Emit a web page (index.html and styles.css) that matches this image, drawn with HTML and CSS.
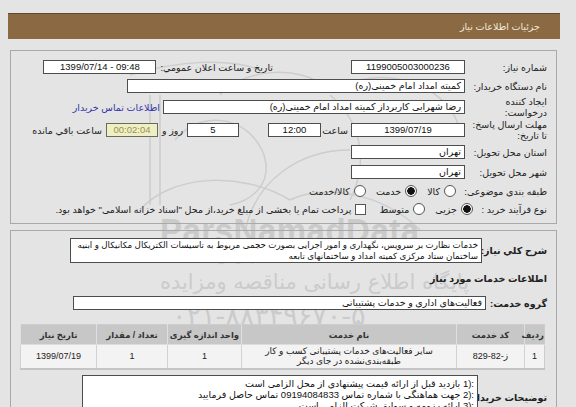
FILE: index.html
```html
<!DOCTYPE html>
<html lang="fa">
<head>
<meta charset="utf-8">
<title>جزئیات اطلاعات نیاز</title>
<link rel="stylesheet" href="styles.css">
</head>
<body>
<div class="page">
  <div class="wm" aria-hidden="true">
    <svg class="wm-logo" width="576" height="407" viewBox="0 0 576 407">
      <g fill="none" stroke="#cdcdcd" stroke-width="1.5">
        <path d="M150 95 L150 205"/>
        <path d="M160 95 L160 205"/>
        <path d="M140 210 C170 175 240 170 290 200"/>
        <path d="M175 140 C200 110 245 115 262 150 C275 180 255 200 230 205"/>
        <path d="M220 95 C240 70 300 62 330 90"/>
        <path d="M245 232 C255 180 300 150 350 150"/>
        <path d="M330 95 C360 120 370 160 350 200"/>
        <path d="M290 200 C320 185 380 190 420 230"/>
        <path d="M360 80 C400 70 450 90 460 130"/>
        <path d="M130 75 C180 60 230 58 260 70"/>
      </g>
    </svg>
    <div class="wm-brand">ParsNamadData</div>
    <div class="wm-script">پارس نماد داده</div>
    <div class="wm-site">پایگاه اطلاع رسانی مناقصه ومزایده</div>
    <div class="wm-phone">۰۲۱-۸۸۳۴۹۶۷۰-۵</div>
  </div>

  <div class="titlebar">جزئیات اطلاعات نیاز</div>

  <div class="panel panel-info">
    <div class="row r1">
      <div class="lbl">شماره نیاز:</div>
      <div class="box num w114">1199005003000236</div>
      <div class="lbl lbl-pub">تاریخ و ساعت اعلان عمومي:</div>
      <div class="box num w113" dir="ltr">1399/07/14 - 09:48</div>
    </div>
    <div class="row r2">
      <div class="lbl">نام دستگاه خریدار:</div>
      <div class="box w338">کمیته امداد امام خمینی(ره)</div>
    </div>
    <div class="row r3">
      <div class="lbl">ایجاد کننده<br>درخواست:</div>
      <div class="box w302">رضا شهرابی کاربرداز کمیته امداد امام خمینی(ره)</div>
      <a class="link" href="#">اطلاعات تماس خریدار</a>
    </div>
    <div class="row r4">
      <div class="lbl">مهلت ارسال پاسخ:<br>تا تاریخ:</div>
      <div class="box num w114" dir="ltr">1399/07/19</div>
      <span class="txt t-hour">ساعت</span>
      <div class="box num w53" dir="ltr">12:00</div>
      <div class="box num w52 days">5</div>
      <span class="txt t-day">روز و</span>
      <div class="box num w52 timer" dir="ltr">00:02:04</div>
      <span class="txt t-rem">ساعت باقي مانده</span>
    </div>
    <div class="row r5">
      <div class="lbl">استان محل تحویل:</div>
      <div class="box w114">تهران</div>
    </div>
    <div class="row r6">
      <div class="lbl">شهر محل تحویل:</div>
      <div class="box w114">تهران</div>
    </div>
    <div class="row r7">
      <div class="lbl">طبقه بندی موضوعی:</div>
      <span class="radio first"></span><span class="opt">کالا</span>
      <span class="radio on"></span><span class="opt">خدمت</span>
      <span class="radio"></span><span class="opt">کالا/خدمت</span>
    </div>
    <div class="row r8">
      <div class="lbl lbl-proc">نوع فرآیند خرید :</div>
      <span class="radio on"></span><span class="opt">جزیی</span>
      <span class="radio"></span><span class="opt">متوسط</span>
      <span class="check"></span><span class="opt">پرداخت تمام یا بخشی از مبلغ خرید،از محل "اسناد خزانه اسلامی" خواهد بود.</span>
    </div>
  </div>

  <div class="panel panel-need">
    <div class="row d-row">
      <div class="lbl-b">شرح کلي نياز:</div>
      <div class="box desc">خدمات نظارت بر سرویس، نگهداری و امور اجرایی بصورت حجمی مربوط به تاسیسات الکتریکال مکانیکال و ابنیه<br>ساختمان ستاد مرکزی کمیته امداد و ساختمانهای تابعه</div>
    </div>
    <div class="sec-title">اطلاعات خدمات مورد نیاز</div>
    <div class="row g-row">
      <div class="lbl-b lbl-g">گروه خدمت:</div>
      <div class="box group">فعالیت‌های اداری و خدمات پشتیبانی</div>
    </div>
    <table class="svc">
      <thead>
        <tr>
          <th class="c-no">ردیف</th>
          <th class="c-code">کد خدمت</th>
          <th class="c-name">نام خدمت</th>
          <th class="c-unit">واحد اندازه گیری</th>
          <th class="c-qty">تعداد / مقدار</th>
          <th class="c-date">تاریخ نیاز</th>
        </tr>
      </thead>
      <tbody>
        <tr>
          <td>1</td>
          <td><span dir="ltr">829-82-ز</span></td>
          <td>سایر فعالیت‌های خدمات پشتیبانی کسب و کار<br>طبقه‌بندی‌نشده در جای دیگر</td>
          <td>1</td>
          <td>1</td>
          <td>1399/07/19</td>
        </tr>
      </tbody>
    </table>
    <div class="row n-row">
      <div class="lbl-b lbl-n">توضیحات خریدار:</div>
      <div class="box notes">
        <div><bdi dir="ltr">1):</bdi> بازدید قبل از ارائه قیمت پیشنهادی از محل الزامی است</div>
        <div><bdi dir="ltr">2):</bdi> جهت هماهنگی با شماره تماس 09194084833 تماس حاصل فرمایید</div>
        <div><bdi dir="ltr">3):</bdi> ارائه رزومه و سوابق شرکت الزامی است</div>
      </div>
    </div>
  </div>
</div>
</body>
</html>
```

FILE: styles.css
```css
* { box-sizing: border-box; }
html, body { margin: 0; padding: 0; }
body {
  background: #e4e4e4;
  font-family: "Liberation Sans", "DejaVu Sans", sans-serif;
  font-size: 9.5px;
  color: #222;
  width: 576px;
  height: 407px;
  overflow: hidden;
}
.page { position: relative; padding-top: 13px; height: 407px; }

/* watermark (behind content) */
.wm { position: absolute; left: 0; top: 0; width: 576px; height: 407px; z-index: 0; pointer-events: none; }
.wm-logo { position: absolute; left: 0; top: 0; }
.wm-brand { position: absolute; left: 160px; top: 212px; font: bold 33px "Liberation Sans", sans-serif; color: #cacaca; letter-spacing: 0.5px; }
.wm-script { position: absolute; left: 150px; top: 244px; font: italic 17px "DejaVu Sans", sans-serif; color: #d2d2d2; }
.wm-site { position: absolute; left: 160px; top: 270px; font: 21px "DejaVu Sans", sans-serif; color: #cbcbcb; }
.wm-phone { position: absolute; left: 172px; top: 300px; font: 27px "DejaVu Sans", sans-serif; color: #cbcbcb; }

.titlebar, .panel { position: relative; z-index: 1; }

.titlebar {
  margin-left: 8px;
  width: 552px;
  height: 26px;
  background: #8b6a43;
  border-top: 1px solid #5e4a33;
  color: #f3eadc;
  direction: rtl;
  padding-right: 20px;
  line-height: 25px;
  font-size: 9.5px;
}

.panel {
  margin-left: 10px;
  width: 547px;
  border: 1px solid #a9a9a9;
  direction: rtl;
}
.panel-info { margin-top: 11px; height: 174px; padding: 9px 9px 0 0; }
.panel-need { margin-top: 6px; height: 200px; padding: 7px 9px 0 0; }

.row { display: flex; align-items: center; }
.lbl { width: 82px; flex: none; line-height: 11px; color: #222; white-space: nowrap; }
.box {
  flex: none;
  height: 14px;
  border: 1px solid #4d4d4d;
  background: #fff;
  line-height: 12px;
  padding: 0 3px;
  white-space: nowrap;
  overflow: hidden;
  color: #111;
}
.num { text-align: center; }
.w114 { width: 114px; }
.w113 { width: 113px; }
.w338 { width: 338px; }
.w302 { width: 302px; }
.w53 { width: 53px; }
.w52 { width: 52px; }

.r1 { height: 14px; }
.lbl-pub { width: auto; margin-right: 78px; margin-left: 4px; }
.r2 { height: 14px; margin-top: 5px; }
.r3 { height: 24px; margin-top: 2px; }
.r4 { height: 22px; }
.r5 { height: 14px; margin-top: 4px; }
.r6 { height: 14px; margin-top: 6px; }
.r7 { height: 14px; margin-top: 5px; }
.r8 { height: 14px; margin-top: 4px; }

.link { color: #3535a8; text-decoration: none; margin-right: 3px; white-space: nowrap; }

.txt { flex: none; white-space: nowrap; }
.t-hour { width: 30px; padding-right: 3px; }
.days { margin-right: 29px; }
.t-day { padding: 0 4px; }
.timer { background: #efefc6; color: #9a9150; border-color: #6b6b5a; }
.t-rem { padding-right: 4px; }

.radio {
  flex: none;
  width: 12px; height: 12px;
  border: 1px solid #555;
  border-radius: 50%;
  background: #fff;
  margin-right: 10px;
}
.radio.first { margin-right: 9px; }
.radio.on { background: radial-gradient(circle, #111 0 3.5px, #fff 4px); }
.check {
  flex: none;
  width: 11px; height: 11px;
  border: 1px solid #555;
  background: #fff;
  margin-right: 13px;
}
.opt { flex: none; margin-right: 4px; white-space: nowrap; }
.lbl-proc { width: 74px; }
.r8 .radio.on { margin-right: 0; }

.lbl-b { width: 65px; flex: none; font-weight: bold; font-size: 9.5px; color: #222; white-space: nowrap; }
.lbl-g { width: 61px; }
.lbl-n { width: 69px; }
.d-row { height: 25px; }
.desc { width: 412px; height: 25px; font-size: 8.7px; line-height: 10.5px; padding: 1px 3px; }
.sec-title { margin-top: 10px; line-height: 12px; font-weight: bold; font-size: 9.5px; }
.g-row { height: 14px; margin-top: 11px; }
.group { width: 413px; }

.svc {
  margin-top: 14px;
  margin-right: 2px;
  width: 524px;
  border-collapse: collapse;
  table-layout: fixed;
  border: 1px solid #cdcdcd;
  border-bottom: 2px solid #c4c4c4;
  text-align: center;
}
.svc th {
  height: 20px;
  background: #c7c7c7;
  color: #333;
  font-weight: bold;
  font-size: 8.5px;
  border-left: 1px solid #dedede;
  padding: 0;
  white-space: nowrap;
  overflow: visible;
}
.svc td {
  height: 24px;
  background: #f3f3f3;
  border-left: 1px solid #d2d2d2;
  border-top: 1px solid #dcdcdc;
  line-height: 10.5px;
  font-size: 9px;
  padding: 0;
  color: #222;
}
.c-no { width: 20px; }
.c-code { width: 68px; }
.c-name { width: 215px; }
.c-unit { width: 74px; }
.c-qty { width: 71px; }
.c-date { width: 76px; }

.n-row { margin-top: 5px; height: 46px; }
.notes { width: 396px; height: 46px; line-height: 11px; padding: 2px 3px; }
```
